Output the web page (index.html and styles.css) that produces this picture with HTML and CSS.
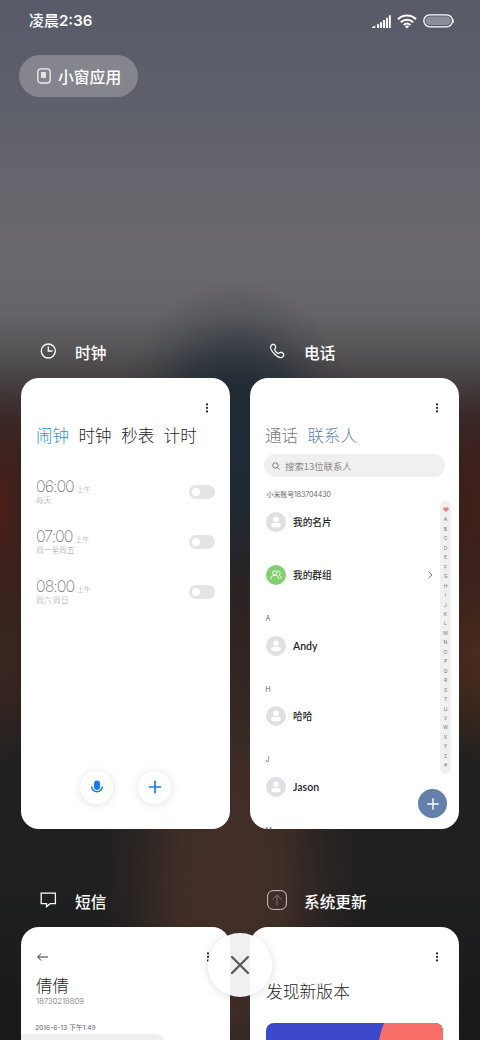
FILE: index.html
```html
<!DOCTYPE html>
<html lang="zh-CN">
<head>
<meta charset="utf-8">
<title>最近任务</title>
<link rel="stylesheet" href="styles.css">
</head>
<body>
<svg width="0" height="0" class="defs">
  <symbol id="person" viewBox="0 0 20 20"><circle cx="10" cy="10" r="10" fill="#dfe0e4"/><circle cx="10" cy="7.3" r="2.8" fill="#fff"/><rect x="5.3" y="11.1" width="9.4" height="4.2" rx="2" fill="#fff"/></symbol>
  <symbol id="more" viewBox="0 0 4 10"><circle cx="2" cy="1.4" r="1.05"/><circle cx="2" cy="4.9" r="1.05"/><circle cx="2" cy="8.4" r="1.05"/></symbol>
</svg>
<div class="screen">
  <header class="status">
    <span class="clock">凌晨<span class="digits">2:36</span></span>
    <span class="status-icons">
      <svg class="signal" width="19" height="13" viewBox="0 0 19 13" fill="#fff"><path d="M0 13V12L3.3 10.5V13zM5 9.3h2V13H5zM8 7.3h2V13H8zM11 5h2.1v8H11zM14 2.8h2V13h-2zM16.9 .3h1.9V13h-1.9z"/></svg>
      <svg class="wifi" width="20" height="15" viewBox="0 0 20 15" fill="none" stroke="#fff" stroke-width="2"><path d="M1 5.2C6 .2 14 .2 19 5.2M3.8 8.2c3.5-3.3 8.900-3.300 12.400 0M6.600 11c2-1.700 4.800-1.700 6.800 0"/><path d="M7.800 12.200Q10 11 12.200 12.200L10 14.500z" fill="#fff" stroke="none"/></svg>
      <svg class="battery" width="31" height="14" viewBox="0 0 31 14"><rect x=".8" y=".8" width="28.800" height="12" rx="6" fill="none" stroke="#fff" stroke-width="1.300"/><rect x="2.600" y="2.600" width="25.200" height="8.400" rx="4.200" fill="#8b8d98"/><path d="M30.300 5v4" stroke="#ddd"/></svg>
    </span>
  </header>
  <div class="pill">
    <svg width="14" height="16" viewBox="0 0 14 16"><rect x=".8" y=".8" width="12.400" height="14.200" rx="3" fill="none" stroke="#f0f0f2" stroke-width="1.300"/><rect x="4" y="4" width="5" height="6" rx=".6" fill="#e4e4e7"/></svg>
    <span>小窗应用</span>
  </div>

  <main class="tasks">
    <section class="task">
      <h2 class="task-title"><svg class="app-icon" width="22" height="22" viewBox="0 0 22 22"><circle cx="11.300" cy="11" r="7"/><path d="M11.300 6.600V11h4.200"/></svg>时钟</h2>
      <div class="card alarm-card">
        <div class="toolbar"><svg class="more" width="4" height="10"><use href="#more"/></svg></div>
        <nav class="tabs"><b>闹钟</b><span>时钟</span><span>秒表</span><span>计时</span></nav>
        <div class="alarms">
          <div class="alarm"><div><p class="time">06:00<small>上午</small></p><p class="days">每天</p></div><i class="switch"></i></div>
          <div class="alarm"><div><p class="time">07:00<small>上午</small></p><p class="days">周一至周五</p></div><i class="switch"></i></div>
          <div class="alarm"><div><p class="time">08:00<small>上午</small></p><p class="days">周六 周日</p></div><i class="switch"></i></div>
        </div>
        <div class="actions">
          <span class="round"><svg width="14" height="14" viewBox="0 0 14 14"><rect x="4" y=".6" width="6" height="9.400" rx="3" fill="#197bef"/><path d="M1.700 6.500a5.300 5.300 0 0 0 10.600 0" fill="none" stroke="#197bef" stroke-width="1.600"/></svg></span>
          <span class="round"><svg width="14" height="14" viewBox="0 0 14 14"><path d="M7 .8v12.400M.8 7h12.400" stroke="#197bef" stroke-width="1.700"/></svg></span>
        </div>
      </div>
    </section>

    <section class="task">
      <h2 class="task-title"><svg class="app-icon" width="22" height="22" viewBox="0 0 22 22"><path d="M5.200 5.500C6 4.500 7.500 4 8.500 4.700c1.200.8 1.500 2.500.8 3.500-.7.900-.9 1.300-.3 2.400.6 1 1.400 1.800 2.400 2.400 1 .6 1.500.4 2.400-.3 1-.7 2.600-.2 3.500 1 .7 1 .3 2.500-.8 3.300-1.600 1.200-4.400.5-7.200-2.200C6.200 11.900 3.400 7.700 5.200 5.500z"/></svg>电话</h2>
      <div class="card contact-card">
        <div class="toolbar"><svg class="more" width="4" height="10"><use href="#more"/></svg></div>
        <nav class="tabs"><span>通话</span><b>联系人</b></nav>
        <div class="search"><svg width="8" height="8" viewBox="0 0 8 8" fill="none" stroke="#777"><circle cx="3.400" cy="3.400" r="2.700"/><path d="M5.400 5.400L7.600 7.600"/></svg>搜索13位联系人</div>
        <div class="contacts">
          <p class="account">小米账号183704430</p>
          <div class="contact mine"><svg width="20" height="20"><use href="#person"/></svg>我的名片</div>
          <div class="contact groups"><svg width="20" height="20" viewBox="0 0 20 20"><circle cx="10" cy="10" r="10" fill="#83cf70"/><g fill="none" stroke="#fff" stroke-width=".9"><circle cx="8.800" cy="8" r="2.200"/><path d="M4.800 14c.2-2.400 1.800-3.800 4-3.800s3.700 1.400 4 3.800M11.300 6.100c2-.8 3.700 1.100 2.500 3.100l-.6.800c1.300.7 1.900 1.900 2.100 3.500"/></g></svg><span>我的群组</span><svg class="chevron" width="5" height="8" viewBox="0 0 5 8"><path d="M.6.600L4 4L.6 7.400" fill="none" stroke="#777"/></svg></div>
          <p class="letter">A</p>
          <div class="contact"><svg width="20" height="20"><use href="#person"/></svg>Andy</div>
          <p class="letter">H</p>
          <div class="contact zh"><svg width="20" height="20"><use href="#person"/></svg>哈哈</div>
          <p class="letter">J</p>
          <div class="contact"><svg width="20" height="20"><use href="#person"/></svg>Jason</div>
          <p class="letter">M</p>
        </div>
        <div class="index"><span class="heart"><svg width="6" height="5" viewBox="0 0 6 5"><path d="M3 5L.4 2.500C-.6 1 1.600-.9 3 .8C4.400-.9 6.600 1 5.600 2.500z" fill="#ed7f80"/></svg></span><span>A</span><span>B</span><span>C</span><span>D</span><span>E</span><span>F</span><span>G</span><span>H</span><span>I</span><span>J</span><span>K</span><span>L</span><span>M</span><span>N</span><span>O</span><span>P</span><span>Q</span><span>R</span><span>S</span><span>T</span><span>U</span><span>V</span><span>W</span><span>X</span><span>Y</span><span>Z</span><span>#</span></div>
        <span class="fab"><svg width="12" height="12" viewBox="0 0 12 12"><path d="M6 .3v11.400M.3 6h11.400" stroke="#fff" stroke-width="1.400"/></svg></span>
      </div>
    </section>

    <section class="task">
      <h2 class="task-title"><svg class="app-icon" width="22" height="22" viewBox="0 0 22 22"><path d="M4.200 4.200h14.200v10.500h-5.200l-3.700 2.900v-2.900H4.200z"/></svg>短信</h2>
      <div class="card sms-card">
        <div class="toolbar"><svg class="back" width="11" height="8" viewBox="0 0 11 8"><path d="M4 .5L.7 4L4 7.500M.7 4H11" fill="none" stroke="#333"/></svg><svg class="more" width="4" height="10"><use href="#more"/></svg></div>
        <h3 class="name">倩倩</h3>
        <p class="number">18730218809</p>
        <p class="date">2016-6-13 下午1:49</p>
        <div class="bubble"></div>
      </div>
    </section>

    <section class="task">
      <h2 class="task-title"><svg class="app-icon" width="22" height="22" viewBox="0 0 22 22"><rect x="1.600" y="1.600" width="18.800" height="18.800" rx="5.500" stroke="#c5c5c5" stroke-width="1"/><path d="M11 16V6.200M6.500 10.500L11 6l4.500 4.500" stroke="#777" stroke-width="1"/></svg>系统更新</h2>
      <div class="card update-card">
        <div class="toolbar"><svg class="more" width="4" height="10"><use href="#more"/></svg></div>
        <h3 class="version">发现新版本</h3>
        <svg class="banner" width="177" height="80" viewBox="0 0 177 80"><rect width="177" height="80" rx="8" fill="#3d48ca"/><path d="M118 0H169a8 8 0 0 1 8 8V80H108Q108 24 118 0z" fill="#f76f68"/></svg>
      </div>
    </section>
  </main>

  <div class="close"><svg width="20" height="20" viewBox="0 0 20 20"><path d="M2 2L18 18M18 2L2 18" stroke="#555" stroke-width="2.200" stroke-linecap="round"/></svg></div>
</div>
</body>
</html>
```

FILE: styles.css
```css
* { box-sizing: border-box; margin: 0; padding: 0; }
body { width: 480px; height: 1040px; overflow: hidden; font-family: "Noto Sans CJK SC", sans-serif; }
svg { display: block; flex: none; }
.defs { position: absolute; }
.screen {
  position: relative;
  width: 480px;
  height: 1040px;
  overflow: hidden;
  background:
    radial-gradient(ellipse 125px 165px at 236px 445px, #1e2a34 0, rgba(30, 42, 52, .9) 35%, rgba(30, 42, 52, .6) 55%, rgba(30, 42, 52, .2) 78%, rgba(30, 42, 52, 0) 100%),
    radial-gradient(ellipse 60px 160px at 0 510px, #4b1f16 0, rgba(75, 31, 22, .5) 40%, rgba(75, 31, 22, 0) 85%),
    radial-gradient(ellipse 60px 160px at 480px 510px, #431f18 0, rgba(67, 31, 24, .6) 40%, rgba(67, 31, 24, 0) 85%),
    radial-gradient(ellipse 60px 110px at 480px 655px, #4c2b1b 0, rgba(76, 43, 27, .6) 45%, rgba(76, 43, 27, 0) 100%),
    radial-gradient(ellipse 60px 110px at 0 660px, #3a2620 0, rgba(58, 38, 32, 0) 100%),
    radial-gradient(ellipse 130px 300px at 230px 890px, #452f28 0, rgba(69, 47, 40, .85) 40%, rgba(69, 47, 40, .25) 75%, rgba(69, 47, 40, 0) 100%),
    linear-gradient(#585b67 0, #5d606b 90px, #67666d 200px, #69676c 280px, #656367 315px, #59575a 345px, #484446 375px, #342b2d 420px, #2b2123 480px, #2b2221 660px, #202020 750px, #202020 880px, #17191b 1040px);
}
.status { display: flex; justify-content: space-between; height: 42px; padding: 0 26px 0 29px; align-items: center; color: #fff; }
.clock { font-size: 15px; font-weight: 500; line-height: 20px; margin-top: -1px; }
.digits { font-family: Inter, sans-serif; font-weight: 600; font-size: 15px; }
.status-icons { display: flex; align-items: center; gap: 6px; }
.pill { display: flex; align-items: center; gap: 7px; width: 119px; height: 42px; margin: 13px 0 0 19px; padding-left: 18px; border-radius: 21px; background: #85868d; color: #fff; font-size: 15.800px; font-weight: 500; }
.tasks { display: grid; grid-template-columns: 209px 209px; grid-template-rows: 501px 501px; gap: 48px 20px; padding: 231px 0 0 21px; }
.task { display: flex; flex-direction: column; }
.task-title { display: flex; align-items: center; gap: 16px; height: 50px; padding-left: 16px; color: #fff; font-size: 15.700px; font-weight: 500; line-height: 52px; }
.app-icon { fill: none; stroke: #fff; stroke-width: 1.3; margin-top: -4px; }
.card { position: relative; height: 451px; border-radius: 18px; background: #fff; overflow: hidden; }
.toolbar { display: flex; justify-content: flex-end; align-items: center; height: 44px; padding: 16px 21px 0 16px; }
.contact-card .toolbar, .update-card .toolbar { padding-right: 20px; }
.more { fill: #222; }
.tabs { display: flex; gap: 9.600px; height: 27px; padding-left: 15px; font-size: 16.500px; font-weight: 300; line-height: 27px; color: #222; }
.tabs b { font-weight: 300; color: #2c91f4; }
.alarms { padding: 23px 15px 0; }
.alarm { display: flex; justify-content: space-between; height: 50.200px; }
.time { height: 21px; font-family: Inter, "Noto Sans CJK SC", sans-serif; font-size: 16px; font-weight: 200; letter-spacing: -1px; line-height: 28px; color: #777; }
.time small { margin-left: 3px; font-size: 7px; letter-spacing: 0; color: #999; font-weight: 300; }
.days { font-size: 7.700px; line-height: 13px; color: #999; font-weight: 300; }
.switch { width: 26px; height: 14px; margin-top: 13px; padding: 3px; border-radius: 7px; background: #e4e4e4; }
.switch::before { content: ""; display: block; width: 8px; height: 8px; border-radius: 50%; background: #fff; }
.actions { display: flex; justify-content: center; gap: 25px; margin-top: 148px; }
.round { display: flex; align-items: center; justify-content: center; width: 33px; height: 33px; border-radius: 50%; background: #fff; box-shadow: 0 1px 10px rgba(0, 0, 0, .12); }
.contact-card .tabs { color: #777; }
.contact-card .tabs b { color: #5f7faf; }
.search { display: flex; align-items: center; gap: 5px; width: 181px; height: 23px; margin: 5px 0 0 14px; padding-left: 8px; border-radius: 12px; background: #f0f0f0; font-size: 9.400px; color: #888; font-weight: 400; }
.contacts { padding-left: 15.500px; }
.account { height: 35px; padding: 11px 0 0 1px; font-family: Inter, "Noto Sans CJK SC", sans-serif; font-size: 7px; line-height: 13px; color: #666; letter-spacing: -.1px; }
.contact { display: flex; align-items: center; gap: 7.500px; height: 20px; margin-bottom: 33px; font-family: Lato, "Noto Sans CJK SC", sans-serif; font-size: 10.500px; font-weight: 600; color: #222; }
.contact.mine, .contact.groups, .contact.zh { font-weight: 500; font-size: 9.700px; }
.contact.groups { margin-bottom: 28px; }
.chevron { margin-left: 89px; }
.letter { height: 12px; margin: 0 0 10.700px; font-family: Inter, sans-serif; font-size: 7px; line-height: 12px; color: #666; }
.letter + .contact { margin-bottom: 28px; }
.index { position: absolute; left: 190px; top: 123px; display: grid; grid-template-rows: repeat(28, 9.460px); width: 11px; height: 273px; padding-top: 4px; border-radius: 6px; background: #f0f0f0; font-family: Inter, sans-serif; font-size: 5px; line-height: 10px; text-align: center; color: #777; }
.heart { display: flex; align-items: center; justify-content: center; }
.fab { position: absolute; left: 168px; top: 411px; display: flex; align-items: center; justify-content: center; width: 29px; height: 29px; border-radius: 50%; background: #647fa9; }
.sms-card .toolbar { justify-content: space-between; padding-right: 20px; }
.name { height: 25px; margin-top: 1px; padding-left: 15px; font-size: 16.500px; font-weight: 300; line-height: 27px; color: #222; }
.number { padding-left: 15px; font-family: Inter, sans-serif; font-size: 8px; letter-spacing: -.2px; font-weight: 300; line-height: 8px; color: #777; }
.date { margin-top: 17px; padding-left: 14px; font-family: Inter, "Noto Sans CJK SC", sans-serif; font-size: 6.700px; line-height: 12px; color: #666; }
.bubble { width: 144px; height: 60px; border-radius: 0 10px 10px 0; background: #efefef; }
.version { height: 40px; padding-left: 16px; font-size: 16.800px; font-weight: 300; line-height: 40px; color: #222; }
.banner { margin: 12px 0 0 16px; }
.close { position: absolute; left: 208px; top: 933px; display: flex; align-items: center; justify-content: center; width: 64px; height: 64px; border-radius: 50%; background: linear-gradient(90deg, #fff 0 22px, #f0f0f0 22px 42px, #fff 42px); box-shadow: 0 1px 10px rgba(0, 0, 0, .14); }
```
